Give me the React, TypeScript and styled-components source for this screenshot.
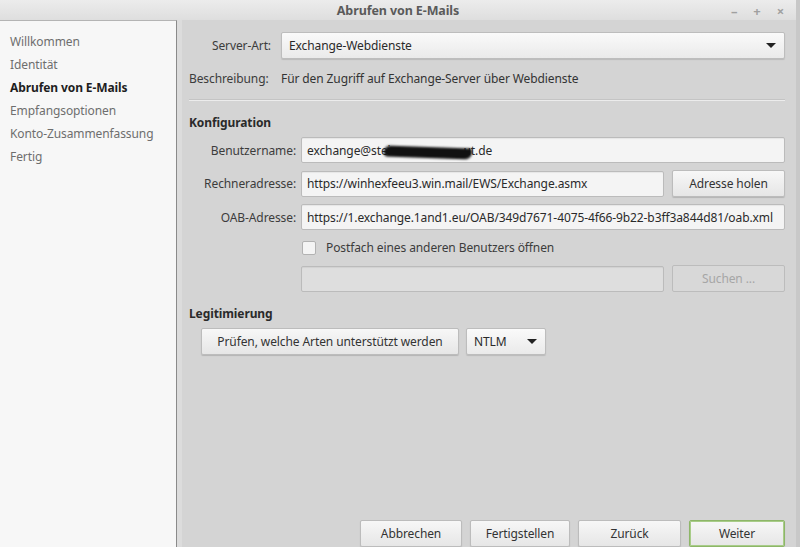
import React, { useState } from "react";
import styled, { createGlobalStyle } from "styled-components";

const GlobalStyle = createGlobalStyle`
  html, body {
    margin: 0;
    padding: 0;
    background: #d4d4d4;
  }
  body {
    font-family: "Noto Sans", "DejaVu Sans", sans-serif;
    font-size: 12px;
    letter-spacing: -0.1px;
    color: #333;
  }
`;

const Window = styled.div`
  width: 800px;
  height: 547px;
  display: flex;
  flex-direction: column;
  overflow: hidden;
  box-sizing: border-box;
  border-right: 4px solid #c8c8c8;
  box-shadow: inset -3px 0 0 #999;
`;

const TitleBar = styled.div`
  height: 20px;
  flex-shrink: 0;
  display: flex;
  align-items: center;
  justify-content: center;
  position: relative;
  background: linear-gradient(#ececec, #dedede);
  font-weight: bold;
  font-size: 12.5px;
  color: #5a5a5a;
`;

const TitleButtons = styled.div`
  position: absolute;
  right: 12px;
  top: 2px;
  display: flex;
  gap: 16px;
  color: #a0a0a0;
  font-size: 13px;
`;

const Body = styled.div`
  flex: 1;
  display: flex;
  min-height: 0;
`;

const Sidebar = styled.div`
  flex-shrink: 0;
  background: #f7f7f7;
  border-top: 1px solid #b4b4b4;
  border-right: 1px solid #8a8a8a;
  box-sizing: border-box;
  width: 177px;
  padding-top: 9px;
  display: flex;
  flex-direction: column;
`;

const NavItem = styled.div<{ $active?: boolean }>`
  height: 23px;
  line-height: 23px;
  padding-left: 10px;
  font-size: 12px;
  color: ${(p) => (p.$active ? "#1e1e1e" : "#6e6e6e")};
  font-weight: ${(p) => (p.$active ? "bold" : "normal")};
`;

const Main = styled.div`
  flex: 1;
  display: flex;
  flex-direction: column;
  border-left: 5px solid #dcdcdc;
  background: #d4d4d4;
  padding: 12px 11px 0 7px;
  box-sizing: border-box;
`;

const Row = styled.div<{ $top?: number }>`
  display: grid;
  grid-template-columns: 82px 1fr;
  column-gap: 10px;
  align-items: center;
  margin-top: ${(p) => p.$top ?? 0}px;
`;

const FormRow = styled.div`
  display: grid;
  grid-template-columns: 107px 1fr 116px;
  column-gap: 5px;
  align-items: center;
`;

const Label = styled.div<{ $left?: boolean }>`
  text-align: ${(p) => (p.$left ? "left" : "right")};
  color: #3c3c3c;
  white-space: nowrap;
`;

const Select = styled.div<{ $width?: number }>`
  height: 27px;
  ${(p) => (p.$width ? `width: ${p.$width}px;` : "")}
  box-sizing: border-box;
  display: flex;
  align-items: center;
  justify-content: space-between;
  padding: 0 6px 0 7px;
  border: 1px solid #bdbdbd;
  border-radius: 2px;
  background: linear-gradient(#fafafa, #eaeaea);
  box-shadow: 0 1px 1px rgba(0, 0, 0, 0.12);
  color: #2a2a2a;
`;

const Arrow = styled.span`
  width: 0;
  height: 0;
  border-left: 5px solid transparent;
  border-right: 5px solid transparent;
  border-top: 5px solid #222;
  margin-right: 2px;
`;

const Description = styled.div`
  color: #333;
`;

const Separator = styled.div`
  height: 1px;
  background: #ececec;
  border-top: 1px solid #c4c4c4;
  margin: 12px 0 13px;
`;

const Heading = styled.div<{ $top?: number }>`
  font-weight: bold;
  color: #2a2a2a;
  margin-top: ${(p) => p.$top ?? 0}px;
  margin-bottom: 6px;
`;

const Input = styled.div<{ $disabled?: boolean; $span?: boolean }>`
  grid-column: ${(p) => (p.$span ? "2 / 4" : "2 / 3")};
  height: 26px;
  box-sizing: border-box;
  display: flex;
  align-items: center;
  padding-left: 5px;
  border: 1px solid #bbbbbb;
  border-radius: 2px;
  background: ${(p) => (p.$disabled ? "#dedede" : "#f4f4f4")};
  box-shadow: inset 0 1px 1px rgba(0, 0, 0, 0.06);
  color: #2a2a2a;
  white-space: nowrap;
  overflow: hidden;
`;

const Button = styled.div<{
  $disabled?: boolean;
  $default?: boolean;
  $width?: number;
}>`
  height: 27px;
  ${(p) => (p.$width ? `width: ${p.$width}px;` : "")}
  box-sizing: border-box;
  display: flex;
  align-items: center;
  justify-content: center;
  border: 1px solid ${(p) => (p.$default ? "#8db668" : "#bcbcbc")};
  border-radius: 2px;
  background: ${(p) =>
    p.$disabled ? "#d8d8d8" : "linear-gradient(#f7f7f7, #e6e6e6)"};
  box-shadow: ${(p) =>
    p.$default
      ? "inset 0 0 0 1px #a8cc88, 0 1px 1px rgba(0,0,0,0.12)"
      : p.$disabled
      ? "none"
      : "0 1px 1px rgba(0, 0, 0, 0.15)"};
  color: ${(p) => (p.$disabled ? "#a6a6a6" : "#333")};
  white-space: nowrap;
`;

const SideButton = styled(Button)`
  grid-column: 3 / 4;
  width: 113px;
  justify-self: end;
`;

// black marker stroke hiding part of the address
const Redacted = styled.span`
  display: inline-block;
  width: 88px;
  height: 11px;
  margin: 4px -8px 0 -7px;
  background: #111;
  border-radius: 6px 3px 7px 4px;
  transform: rotate(2deg);
  filter: blur(0.8px);
`;

const CheckRow = styled.div`
  grid-column: 2 / 4;
  display: flex;
  align-items: center;
  gap: 10px;
  height: 21px;
  padding-left: 1px;
`;

const Checkbox = styled.span`
  width: 12px;
  height: 12px;
  border: 1px solid #b2b2b2;
  border-radius: 2px;
  background: #f4f4f4;
`;

const Stack = styled.div`
  display: flex;
  flex-direction: column;
  gap: 7px;
`;

const AuthRow = styled.div`
  display: flex;
  gap: 7px;
  margin-left: 12px;
`;

const Footer = styled.div`
  margin-top: auto;
  display: flex;
  justify-content: flex-end;
  gap: 8px;
`;

const navItems = [
  "Willkommen",
  "Identität",
  "Abrufen von E-Mails",
  "Empfangsoptionen",
  "Konto-Zusammenfassung",
  "Fertig",
];

export default function App() {
  const [active] = useState(2);

  return (
    <>
      <GlobalStyle />
      <Window>
        <TitleBar>
          Abrufen von E-Mails
          <TitleButtons>
            <span>–</span>
            <span>+</span>
            <span>×</span>
          </TitleButtons>
        </TitleBar>
        <Body>
          <Sidebar>
            {navItems.map((item, i) => (
              <NavItem key={item} $active={i === active}>
                {item}
              </NavItem>
            ))}
          </Sidebar>
          <Main>
            <Row>
              <Label>Server-Art:</Label>
              <Select>
                Exchange-Webdienste
                <Arrow />
              </Select>
            </Row>
            <Row $top={11}>
              <Label $left>Beschreibung:</Label>
              <Description>
                Für den Zugriff auf Exchange-Server über Webdienste
              </Description>
            </Row>
            <Separator />
            <Heading>Konfiguration</Heading>
            <Stack>
              <FormRow>
                <Label>Benutzername:</Label>
                <Input $span>
                  exchange@stei
                  <Redacted />
                  ut.de
                </Input>
              </FormRow>
              <FormRow>
                <Label>Rechneradresse:</Label>
                <Input>https://winhexfeeu3.win.mail/EWS/Exchange.asmx</Input>
                <SideButton>Adresse holen</SideButton>
              </FormRow>
              <FormRow>
                <Label>OAB-Adresse:</Label>
                <Input $span>
                  https://1.exchange.1and1.eu/OAB/349d7671-4075-4f66-9b22-b3ff3a844d81/oab.xml
                </Input>
              </FormRow>
              <FormRow>
                <CheckRow>
                  <Checkbox />
                  <Label $left>Postfach eines anderen Benutzers öffnen</Label>
                </CheckRow>
              </FormRow>
              <FormRow>
                <Input $disabled />
                <SideButton $disabled>Suchen ...</SideButton>
              </FormRow>
            </Stack>
            <Heading $top={13}>Legitimierung</Heading>
            <AuthRow>
              <Button $width={258}>Prüfen, welche Arten unterstützt werden</Button>
              <Select $width={80}>
                NTLM
                <Arrow />
              </Select>
            </AuthRow>
            <Footer>
              <Button $width={102}>Abbrechen</Button>
              <Button $width={100}>Fertigstellen</Button>
              <Button $width={103}>Zurück</Button>
              <Button $default $width={96}>
                Weiter
              </Button>
            </Footer>
          </Main>
        </Body>
      </Window>
    </>
  );
}
